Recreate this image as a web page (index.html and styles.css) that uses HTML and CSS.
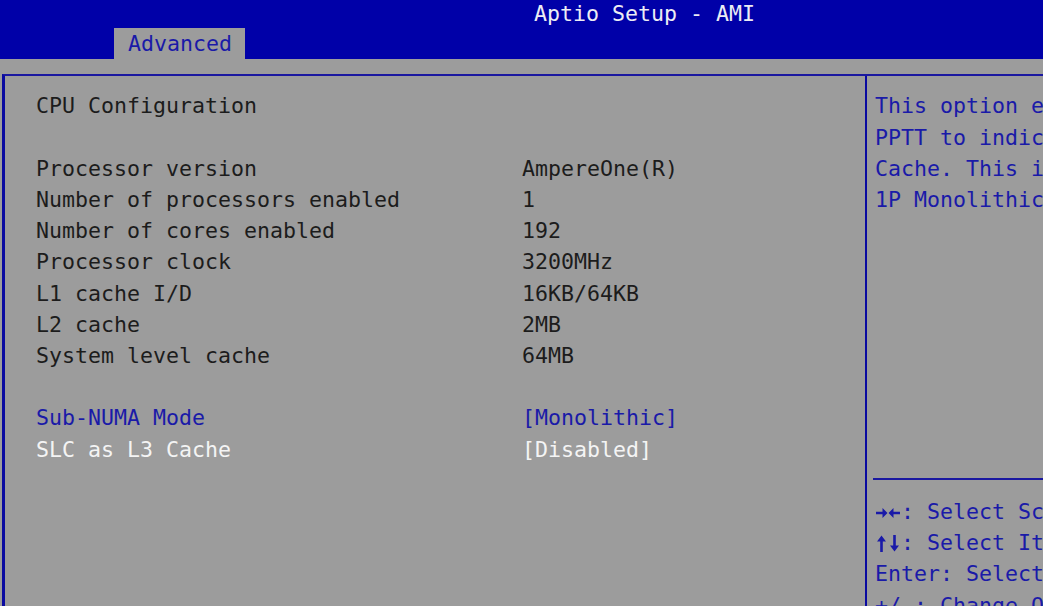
FILE: index.html
```html
<!DOCTYPE html>
<html lang="en">
<head>
	<meta charset="UTF-8">
	<title>Aptio Setup - AMI</title>
	<link rel="stylesheet" href="styles.css">
</head>
<body>
	<div id="screen">
		<header id="topbar">
			<div class="title">Aptio Setup - AMI</div>
			<nav class="tabs">
				<a class="tab" href="javascript:;">Advanced</a>
			</nav>
		</header>

		<main id="frame">
			<section class="settings">
				<div class="heading">CPU Configuration</div>

				<ul class="group">
					<li><span class="label">Processor version</span><span class="value">AmpereOne(R)</span></li>
					<li><span class="label">Number of processors enabled</span><span class="value">1</span></li>
					<li><span class="label">Number of cores enabled</span><span class="value">192</span></li>
					<li><span class="label">Processor clock</span><span class="value">3200MHz</span></li>
					<li><span class="label">L1 cache I/D</span><span class="value">16KB/64KB</span></li>
					<li><span class="label">L2 cache</span><span class="value">2MB</span></li>
					<li><span class="label">System level cache</span><span class="value">64MB</span></li>
				</ul>

				<ul class="group">
					<li class="option"><span class="label">Sub-NUMA Mode</span><span class="value">[Monolithic]</span></li>
					<li class="option selected"><span class="label">SLC as L3 Cache</span><span class="value">[Disabled]</span></li>
				</ul>
			</section>

			<aside class="help">
				<div class="help-text">
					<p>This option enables/disables</p>
					<p>PPTT to indicate SLC as L3</p>
					<p>Cache. This is supported in</p>
					<p>1P Monolithic mode only.</p>
				</div>
				<div class="keys">
					<p><svg class="arrows" viewBox="0 0 26 19" width="26" height="19"><path d="M1 10H9M25 10H17" stroke="currentColor" stroke-width="2.6" fill="none"/><path d="M7.5 5L12.5 10L7.5 15Z M18.5 5L13.5 10L18.5 15Z" fill="currentColor"/></svg>: Select Screen</p>
					<p><svg class="arrows" viewBox="0 0 26 19" width="26" height="19"><path d="M6.5 18V6M19.5 1V13" stroke="currentColor" stroke-width="2.6" fill="none"/><path d="M2 7.5L6.5 1.5L11 7.5Z M15 11.5L19.5 17.5L24 11.5Z" fill="currentColor"/></svg>: Select Item</p>
					<p>Enter: Select</p>
					<p>+/-: Change Opt.</p>
				</div>
			</aside>
		</main>
	</div>
</body>
</html>
```

FILE: styles.css
```css
html,
body {
	margin: 0;
	padding: 0;
	height: 100%;
	overflow: hidden;
}
body {
	background: #9c9c9c;
	color: #1c1c1c;
	font-family: "DejaVu Sans Mono", "Liberation Mono", monospace;
	font-size: 21.6px;
	line-height: 31.2px;
}
ul {
	margin: 0;
	padding: 0;
	list-style: none;
}
p {
	margin: 0;
}
a {
	text-decoration: none;
}
#screen {
	width: 1043px;
	height: 606px;
	overflow: hidden;
}
#topbar {
	height: 59px;
	background: #0000a8;
}
#topbar .title {
	height: 28px;
	line-height: 28px;
	padding-left: 534px;
	color: #ececf4;
	white-space: nowrap;
}
#topbar .tabs {
	display: flex;
	padding-left: 114px;
}
#topbar .tab {
	width: 131px;
	height: 31px;
	line-height: 32px;
	box-sizing: border-box;
	padding-left: 14px;
	background: #9c9c9c;
	color: #1a1aa8;
}
#frame {
	display: flex;
	height: 530px;
	margin: 15px 0 0 2px;
	border-top: 2px solid #1a18a0;
	border-left: 3px solid #0a0aa0;
	white-space: nowrap;
}
.settings {
	width: 860px;
	flex: none;
	box-sizing: border-box;
	padding: 14.4px 0 0 31px;
}
.heading {
	margin-bottom: 31.2px;
}
.group li {
	display: grid;
	grid-template-columns: 486px auto;
}
.group + .group {
	margin-top: 31.2px;
}
.group .option {
	color: #1a1aa8;
}
.group .selected {
	color: #f4f4f4;
}
.help {
	flex: 1;
	min-width: 0;
	border-left: 2px solid #0a0aa0;
	overflow: hidden;
}
.help-text {
	height: 402px;
	box-sizing: border-box;
	padding: 14.4px 0 0 8px;
	color: #1a1aa8;
}
.keys {
	margin-left: 6px;
	padding: 16px 0 0 2px;
	border-top: 2px solid #1a18a0;
	color: #1a1aa8;
}
.keys .arrows {
	vertical-align: -3px;
}
```
